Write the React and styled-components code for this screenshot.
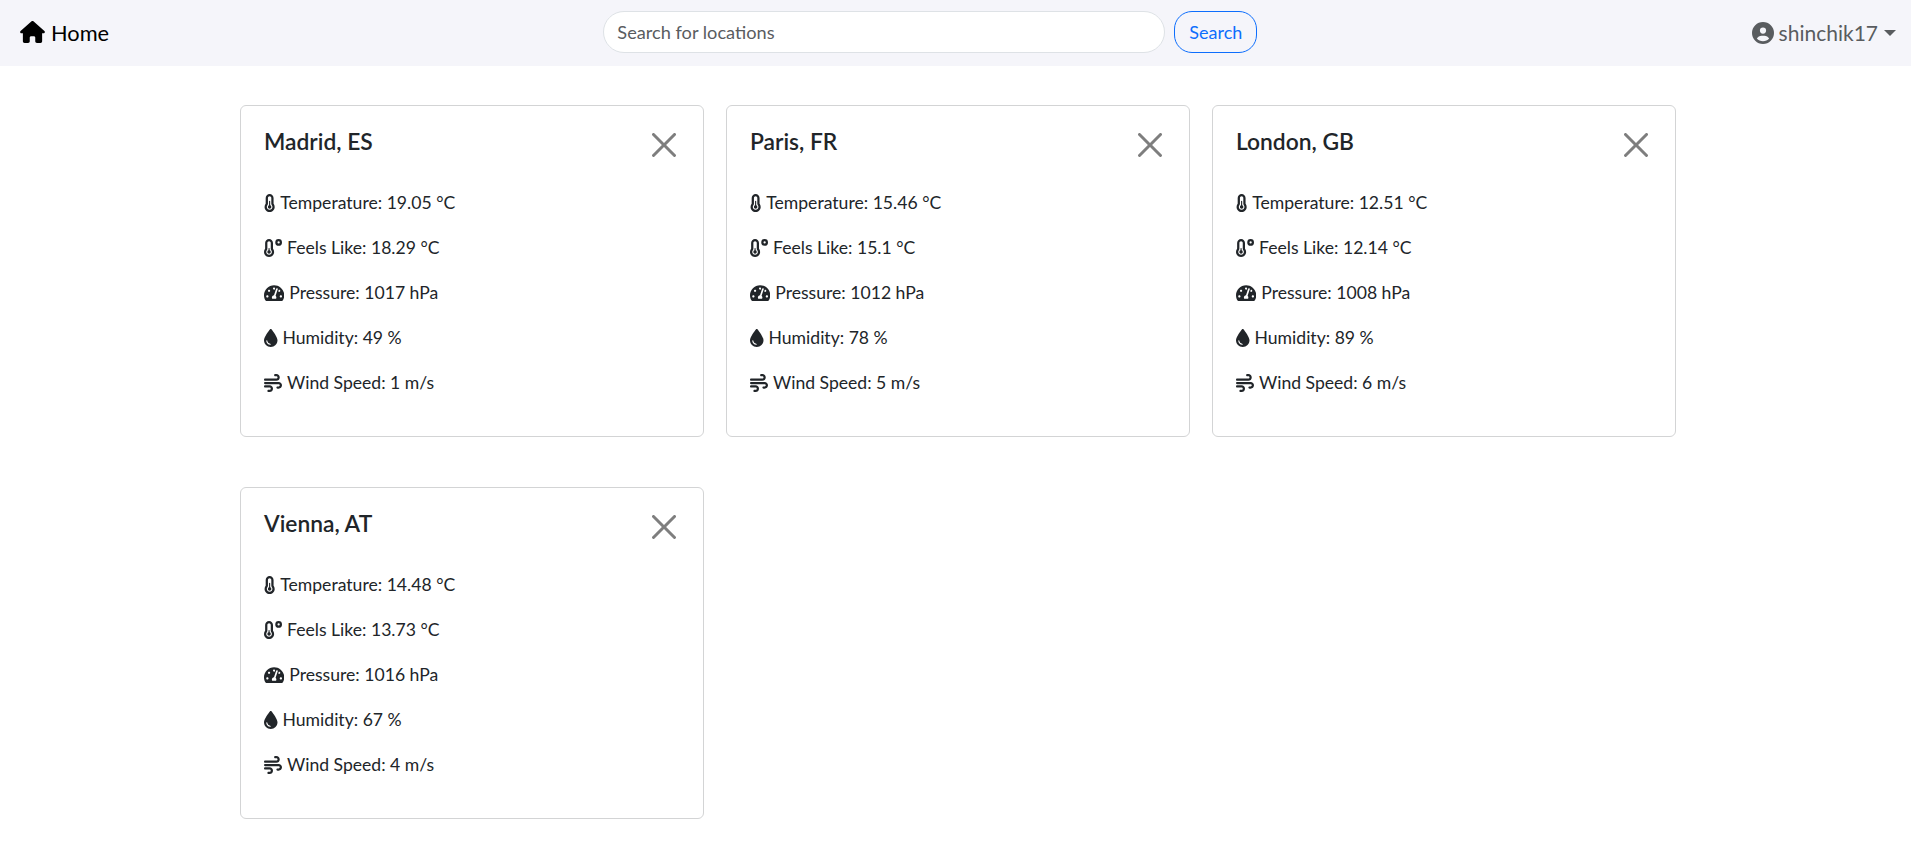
import styled, { createGlobalStyle } from "styled-components";
import { FaTachometerAlt } from "react-icons/fa";
import {
  FaHouse,
  FaCircleUser,
  FaTemperatureHalf,
  FaTemperatureLow,
  FaDroplet,
  FaWind,
} from "react-icons/fa6";

const GlobalStyle = createGlobalStyle`
  * {
    box-sizing: border-box;
  }
  body {
    margin: 0;
    background: #fff;
    color: #212529;
    font-family: "Lato", "Open Sans", sans-serif;
    font-size: 17.6px;
    line-height: 27px;
  }
`;

const NavBar = styled.nav`
  display: flex;
  justify-content: space-between;
  align-items: center;
  height: 66px;
  padding: 0 15px 0 20px;
  background: #f5f5fa;
`;

const Brand = styled.a`
  display: flex;
  align-items: center;
  gap: 6px;
  margin-bottom: 2px;
  color: #000;
  font-size: 21.8px;
  svg {
    width: 25px;
    height: 22px;
  }
`;

const SearchForm = styled.form`
  display: flex;
  gap: 9px;
  margin-bottom: 2px;
`;

const SearchInput = styled.input`
  width: 562px;
  height: 42px;
  padding: 0 13px;
  border: 1px solid #dee2e6;
  border-radius: 21px;
  background: #fff;
  font: inherit;
  font-size: 18.2px;
  color: #212529;
  outline: none;
  &::placeholder {
    color: #595c5f;
    opacity: 1;
  }
`;

const SearchButton = styled.button`
  width: 83px;
  height: 42px;
  padding: 0;
  border: 1px solid #0d6efd;
  border-radius: 18px;
  background: transparent;
  color: #0d6efd;
  font: inherit;
  font-size: 18px;
`;

const UserMenu = styled.a`
  display: flex;
  align-items: center;
  gap: 5px;
  margin-bottom: 1px;
  color: #595c5f;
  font-size: 21px;
  svg {
    width: 22px;
    height: 22px;
  }
  &::after {
    content: "";
    margin-left: 1px;
    border-top: 6px solid #595c5f;
    border-left: 6px solid transparent;
    border-right: 6px solid transparent;
  }
`;

const Grid = styled.main`
  display: grid;
  grid-template-columns: repeat(3, 464px);
  column-gap: 22px;
  row-gap: 50px;
  padding: 39px 0 38px 240px;
`;

const Card = styled.section`
  height: 332px;
  padding: 22px 23px 20px;
  border: 1px solid #d3d4d5;
  border-radius: 6px;
  background: #fff;
`;

const CardHeader = styled.header`
  display: flex;
  justify-content: space-between;
  height: 61px;
`;

const CardTitle = styled.h5`
  margin: 0;
  font-size: 22.8px;
  font-weight: 600;
  line-height: 27px;
`;

const CloseButton = styled.button`
  width: 24px;
  height: 24px;
  margin: 5px 4px 0 0;
  padding: 0;
  border: 0;
  background: none;
  color: #000;
  opacity: 0.5;
`;

const Stat = styled.p`
  display: flex;
  align-items: center;
  gap: 5px;
  height: 27px;
  margin: 0 0 18px;
  svg {
    flex: none;
    width: ${(props) => props.$iconWidth}px;
    height: 18px;
  }
`;

const CITIES = [
  { name: "Madrid, ES", temp: "19.05", feels: "18.29", pressure: 1017, humidity: 49, wind: 1 },
  { name: "Paris, FR", temp: "15.46", feels: "15.1", pressure: 1012, humidity: 78, wind: 5 },
  { name: "London, GB", temp: "12.51", feels: "12.14", pressure: 1008, humidity: 89, wind: 6 },
  { name: "Vienna, AT", temp: "14.48", feels: "13.73", pressure: 1016, humidity: 67, wind: 4 },
];

function WeatherCard({ city }) {
  return (
    <Card>
      <CardHeader>
        <CardTitle>{city.name}</CardTitle>
        <CloseButton type="button" aria-label="Close">
          <svg viewBox="0 0 16 16" width="24" height="24" fill="currentColor">
            <path d="M.293.293a1 1 0 0 1 1.414 0L8 6.586 14.293.293a1 1 0 1 1 1.414 1.414L9.414 8l6.293 6.293a1 1 0 0 1-1.414 1.414L8 9.414l-6.293 6.293a1 1 0 0 1-1.414-1.414L6.586 8 .293 1.707a1 1 0 0 1 0-1.414z" />
          </svg>
        </CloseButton>
      </CardHeader>
      <Stat $iconWidth={11.25}>
        <FaTemperatureHalf />
        Temperature: {city.temp} °C
      </Stat>
      <Stat $iconWidth={18}>
        <FaTemperatureLow />
        Feels Like: {city.feels} °C
      </Stat>
      <Stat $iconWidth={20.25}>
        <FaTachometerAlt />
        Pressure: {city.pressure} hPa
      </Stat>
      <Stat $iconWidth={13.5}>
        <FaDroplet />
        Humidity: {city.humidity} %
      </Stat>
      <Stat $iconWidth={18}>
        <FaWind />
        Wind Speed: {city.wind} m/s
      </Stat>
    </Card>
  );
}

export default function App() {
  return (
    <>
      <GlobalStyle />
      <NavBar>
        <Brand>
          <FaHouse />
          Home
        </Brand>
        <SearchForm>
          <SearchInput placeholder="Search for locations" />
          <SearchButton type="button">Search</SearchButton>
        </SearchForm>
        <UserMenu>
          <FaCircleUser />
          shinchik17
        </UserMenu>
      </NavBar>
      <Grid>
        {CITIES.map((city) => (
          <WeatherCard key={city.name} city={city} />
        ))}
      </Grid>
    </>
  );
}
